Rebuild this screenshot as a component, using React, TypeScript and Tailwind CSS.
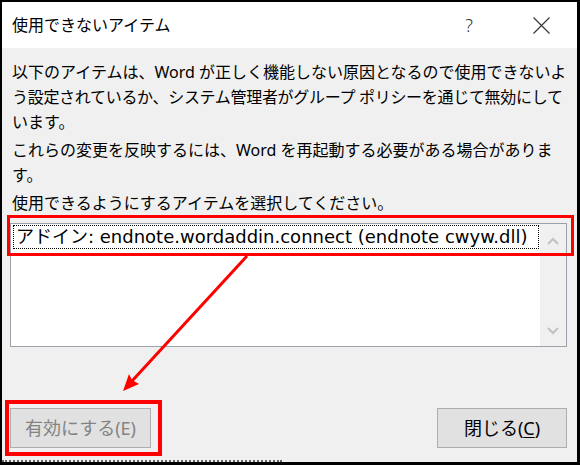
import React from "react";

const jp = "font-['Noto_Sans','Noto_Sans_CJK_JP',sans-serif]";

export default function App() {
  return (
    <div
      className={`relative w-[580px] h-[465px] border-l-2 border-t-2 border-r-[3px] border-b-[3px] border-black bg-[#f0f0f0] flex flex-col ${jp} text-black`}
    >
      {/* Title bar */}
      <div className="h-[46px] bg-white flex items-center pl-[10px] shrink-0">
        <span className="text-[16px] leading-none">使用できないアイテム</span>
        <span className="ml-auto w-[20px] text-center text-[18px] leading-none text-[#333] font-light">?</span>
        <svg
          className="ml-[54px] mr-[27px]"
          width="17"
          height="17"
          viewBox="0 0 17 17"
        >
          <path d="M0.5 0.5 L16.5 16.5 M16.5 0.5 L0.5 16.5" stroke="#333" strokeWidth="1.1" fill="none" />
        </svg>
      </div>

      {/* Body */}
      <div className="flex flex-col pl-[10px] pr-[6px] pt-[12px] text-[16px] leading-[25px] whitespace-nowrap">
        <p>
          以下のアイテムは、Word が正しく機能しない原因となるので使用できないよ
          <br />
          <span className="tracking-[-0.3px]">う設定されているか、システム管理者がグループ ポリシーを通じて無効にして</span>
          <br />
          います。
        </p>
        <p className="mt-[3px]">
          これらの変更を反映するには、Word を再起動する必要がある場合がありま
          <br />
          す。
        </p>
        <p className="mt-[3px]">使用できるようにするアイテムを選択してください。</p>
      </div>

      {/* List box */}
      <div className="mt-[7px] ml-[8px] mr-[10px] h-[124px] border border-[#9ca2aa] bg-white flex shrink-0">
        <div className="flex-1 pl-[2px] pt-[1px] pr-[1px]">
          <div className="h-[24px] border border-dotted border-black flex items-center pl-[2px] font-['DejaVu_Sans','Noto_Sans_CJK_JP',sans-serif] text-[18px] leading-none whitespace-nowrap">
            アドイン: endnote.wordaddin.connect (endnote cwyw.dll)
          </div>
        </div>
        <div className="w-[26px] bg-[#f0f0f0] flex flex-col justify-between">
          <div className="h-[34px] flex items-center justify-center">
            <svg width="12" height="8" viewBox="0 0 12 8">
              <path d="M1 7 L6 2 L11 7" stroke="#c2c2c2" strokeWidth="2" fill="none" />
            </svg>
          </div>
          <div className="h-[30px] flex items-center justify-center">
            <svg width="12" height="8" viewBox="0 0 12 8">
              <path d="M1 1 L6 6 L11 1" stroke="#c2c2c2" strokeWidth="2" fill="none" />
            </svg>
          </div>
        </div>
      </div>

      {/* Buttons */}
      <div className="mt-[61px] ml-[8px] mr-[10px] flex justify-between shrink-0">
        <div className="w-[141px] h-[40px] bg-[#e1e1e1] border border-[#adadad] flex items-center justify-center text-[18px] leading-none text-[#838383]">
          有効にする(E)
        </div>
        <div className="w-[130px] h-[40px] bg-[#e1e1e1] border border-[#adadad] flex items-center justify-center text-[18px] leading-none text-black">
          閉じる(<span className="underline underline-offset-2">C</span>)
        </div>
      </div>

      {/* bottom dotted remnant */}
      <div className="absolute left-0 bottom-0 w-[280px] h-0 border-t-2 border-dotted border-[#666]" />

      {/* Annotations */}
      <div className="absolute left-[5px] top-[213px] w-[567px] h-[41px] border-[3px] border-[#ff0000] pointer-events-none" />
      <div className="absolute left-[3px] top-[398px] w-[157px] h-[56px] border-4 border-[#ff0000] pointer-events-none" />
      <svg className="absolute left-0 top-0 pointer-events-none" width="575" height="460" viewBox="0 0 575 460">
        <line x1="245" y1="254" x2="130" y2="379" stroke="#ff0000" strokeWidth="3" />
        <polygon points="121,389 137,382 130,378 127,372" fill="#ff0000" />
      </svg>
    </div>
  );
}
